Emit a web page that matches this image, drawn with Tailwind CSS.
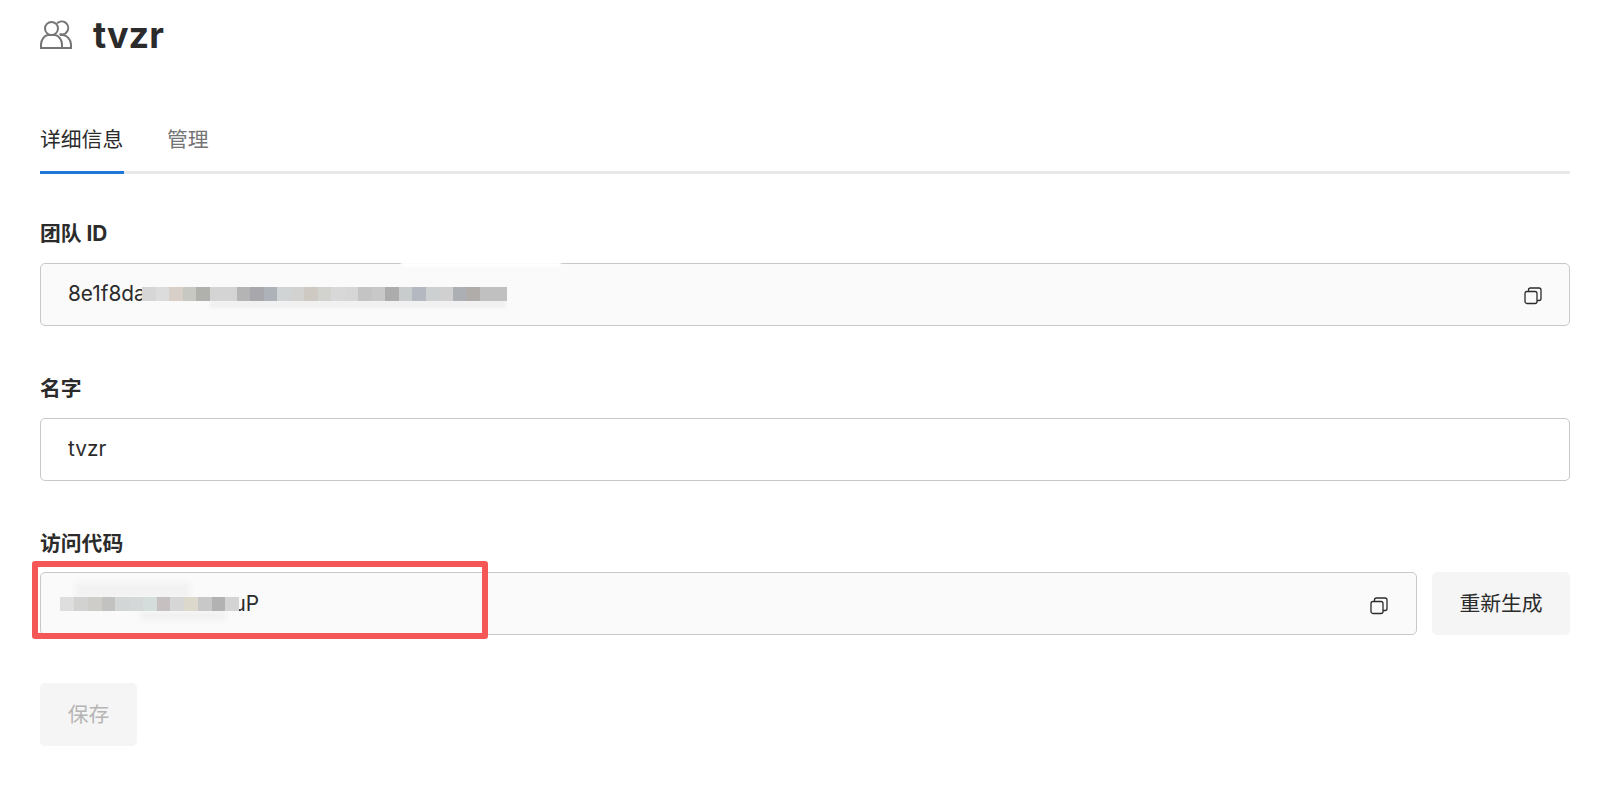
<!DOCTYPE html>
<html lang="zh">
<head>
<meta charset="utf-8">
<script src="https://cdn.jsdelivr.net/npm/@tailwindcss/browser@4"></script>
</head>
<body class="bg-white overflow-hidden">
<div class="relative w-[1608px] h-[786px] pl-[40px] pr-[38px] font-['Inter','Noto_Sans_CJK_SC',sans-serif] text-[#2b2b2b]">
  <header class="flex items-center h-[69px] gap-[21px]">
    <svg class="w-[32px] h-[32px] text-[#757575]" viewBox="0 0 32 32" fill="none" stroke="currentColor" stroke-width="2">
      <circle cx="11.5" cy="9.5" r="6.5"/>
      <path d="M17 4.4a6.5 6.5 0 1 1 2.5 10.6"/>
      <path d="M1 29v-3.5c0-5 3.5-9 7-9.5h7c3.5.5 7 4.500 7 9.500V29z"/>
      <path d="M20 16h3c4 .5 8 4.500 8 9.500V29h-9"/>
    </svg>
    <h1 class="text-[36px] leading-none font-bold">tvzr</h1>
  </header>
  <nav class="mt-[50px] h-[55px] flex gap-[43px] border-b-[3px] border-[#e8e8e8] text-[20.8px] leading-[34px]">
    <a class="block h-[55px] border-b-[3px] border-[#2176d9] w-[84px] pt-[4px]">详细信息</a>
    <a class="block h-[55px] pt-[4px] text-[#757575]">管理</a>
  </nav>
  <section class="mt-[46px]">
    <label class="block text-[20.8px] leading-[28px] font-bold h-[28px]">团队 ID</label>
    <div class="mt-[15px] relative flex items-center justify-between h-[63px] bg-[#fafafa] border border-[#c8c8c8] rounded-[5px] pl-[27px] pr-[27px] text-[20.8px]">
      <span class="pb-[2px]">8e1f8da</span>
      <div class="absolute left-[169px] top-[36px] w-[296px] h-[8px] bg-[#f1f1f1] blur-[1px]"></div>
      <div class="absolute left-[360px] -top-[2px] w-[160px] h-[5px] bg-white blur-[1px]"></div>
      <div class="absolute left-[101px] top-[23px] flex h-[14px]">
        <i class="w-[13.500px] bg-[#d6d6d6]"></i><i class="w-[13.500px] bg-[#dcdcdc]"></i><i class="w-[13.500px] bg-[#d8cfc8]"></i><i class="w-[13.500px] bg-[#c8c8c2]"></i><i class="w-[13.500px] bg-[#b0b0ac]"></i><i class="w-[13.500px] bg-[#d4d4d4]"></i><i class="w-[13.500px] bg-[#d4d4d4]"></i><i class="w-[13.500px] bg-[#b4b4b4]"></i><i class="w-[13.500px] bg-[#a8a8ac]"></i><i class="w-[13.500px] bg-[#acb2b8]"></i><i class="w-[13.500px] bg-[#d0d4d4]"></i><i class="w-[13.500px] bg-[#d2d2d0]"></i><i class="w-[13.500px] bg-[#cfc9c4]"></i><i class="w-[13.500px] bg-[#d2d2ce]"></i><i class="w-[13.500px] bg-[#d8d8d8]"></i><i class="w-[13.500px] bg-[#d6d6d6]"></i><i class="w-[13.500px] bg-[#c4c4c4]"></i><i class="w-[13.500px] bg-[#c8c8c8]"></i><i class="w-[13.500px] bg-[#acacac]"></i><i class="w-[13.500px] bg-[#c8cccc]"></i><i class="w-[13.500px] bg-[#b4b8c0]"></i><i class="w-[13.500px] bg-[#ccd0d0]"></i><i class="w-[13.500px] bg-[#d0d0d0]"></i><i class="w-[13.500px] bg-[#acb0b4]"></i><i class="w-[13.500px] bg-[#b0acaa]"></i><i class="w-[13.500px] bg-[#c0c0c0]"></i><i class="w-[13.500px] bg-[#c0c0c0]"></i>
      </div>
      <svg class="w-[18px] h-[18px] mt-[2px] text-[#2b2b2b]" viewBox="0 0 18 18" fill="none" stroke="currentColor" stroke-width="1.300">
        <rect x="1" y="4.500" width="12" height="12" rx="2"/>
        <path d="M4.500 4.500V3a2 2 0 0 1 2-2H15a2 2 0 0 1 2 2v8.500a2 2 0 0 1-2 2h-2"/>
      </svg>
    </div>
  </section>
  <section class="mt-[49px]">
    <label class="block text-[20.8px] leading-[28px] font-bold h-[28px]">名字</label>
    <div class="mt-[15px] flex items-center h-[63px] bg-white border border-[#c8c8c8] rounded-[5px] pl-[27px] pb-[2px] text-[20.8px]">tvzr</div>
  </section>
  <section class="mt-[49px]">
    <label class="block text-[20.8px] leading-[28px] font-bold h-[28px]">访问代码</label>
    <div class="mt-[14px] flex gap-[15px]">
      <div class="relative flex-1 flex items-center justify-between h-[63px] bg-[#fafafa] border border-[#c8c8c8] rounded-[5px] pl-[19px] pr-[28px] text-[20.8px]">
        <div class="absolute left-[34px] top-[10px] w-[115px] h-[15px] bg-[#f2f2f2] blur-[2px]"></div>
        <div class="absolute left-[100px] top-[38px] w-[85px] h-[9px] bg-[#f1f1f1] blur-[2px]"></div>
        <div class="relative flex items-center">
          <div class="relative z-10 flex h-[14px]">
            <i class="w-[14px] bg-[#dedede]"></i><i class="w-[13.500px] bg-[#d2d2d0]"></i><i class="w-[14px] bg-[#cfcdca]"></i><i class="w-[13.500px] bg-[#c2c2c0]"></i><i class="w-[14px] bg-[#d2d6d6]"></i><i class="w-[13.500px] bg-[#d4d8d8]"></i><i class="w-[14px] bg-[#d4dcdc]"></i><i class="w-[13.500px] bg-[#c6c0c0]"></i><i class="w-[14px] bg-[#d6d6d6]"></i><i class="w-[13.500px] bg-[#dcd8cc]"></i><i class="w-[14px] bg-[#c8c8c8]"></i><i class="w-[13.500px] bg-[#b2b2b2]"></i><i class="w-[13.500px] bg-[#d4d4d4]"></i>
          </div>
          <span class="-ml-[5px]">uP</span>
        </div>
        <svg class="w-[18px] h-[18px] mt-[4px] text-[#2b2b2b]" viewBox="0 0 18 18" fill="none" stroke="currentColor" stroke-width="1.300">
          <rect x="1" y="4.500" width="12" height="12" rx="2"/>
          <path d="M4.500 4.500V3a2 2 0 0 1 2-2H15a2 2 0 0 1 2 2v8.500a2 2 0 0 1-2 2h-2"/>
        </svg>
      </div>
      <button class="w-[138px] h-[63px] bg-[#f5f5f5] rounded-[5px] text-[20.8px]">重新生成</button>
    </div>
  </section>
  <button class="block mt-[48px] w-[97px] h-[63px] bg-[#f5f5f5] rounded-[5px] text-[20.8px] text-[#b5b5b5]">保存</button>
  <div class="absolute left-[32px] top-[561px] w-[456px] h-[78px] border-[6px] border-[#f55656] rounded-[3px]"></div>
</div>
</body>
</html>
